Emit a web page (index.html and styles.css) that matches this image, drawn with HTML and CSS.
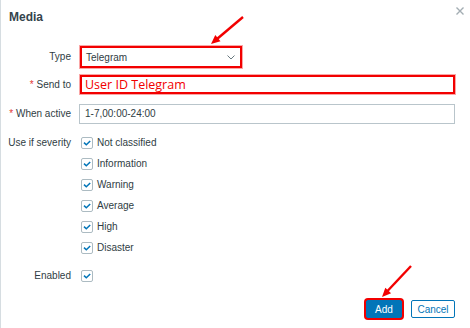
FILE: index.html
```html
<!DOCTYPE html>
<html>
<head>
  <meta charset="UTF-8">
  <title>Media</title>
  <link rel="stylesheet" href="styles.css">
</head>
<body>
  <div class="dialog">
    <div class="dialog-head">
      <h4 class="dialog-title">Media</h4>
      <button class="btn-close" title="Close">
        <svg width="8" height="8" viewBox="0 0 8 8"><path d="M0.5 0.5 L7.5 7.5 M7.5 0.5 L0.5 7.5" stroke="#a3adb3" stroke-width="1.4" fill="none"/></svg>
      </button>
    </div>

    <div class="form">
      <div class="form-row row-type">
        <label class="form-label">Type</label>
        <div class="form-field">
          <div class="select marked">
            <span>Telegram</span>
            <svg width="8" height="5" viewBox="0 0 8 5"><path d="M0.5 0.5 L4 4 L7.5 0.5" stroke="#68787f" stroke-width="1" fill="none"/></svg>
          </div>
        </div>
      </div>

      <div class="form-row row-sendto">
        <label class="form-label"><span class="req">*</span> Send to</label>
        <div class="form-field">
          <div class="input input-note marked">User ID Telegram</div>
        </div>
      </div>

      <div class="form-row row-active">
        <label class="form-label"><span class="req">*</span> When active</label>
        <div class="form-field">
          <div class="input">1-7,00:00-24:00</div>
        </div>
      </div>

      <div class="form-row row-severity">
        <label class="form-label">Use if severity</label>
        <div class="form-field checks">
          <div class="check"><span class="cb"></span>Not classified</div>
          <div class="check"><span class="cb"></span>Information</div>
          <div class="check"><span class="cb"></span>Warning</div>
          <div class="check"><span class="cb"></span>Average</div>
          <div class="check"><span class="cb"></span>High</div>
          <div class="check"><span class="cb"></span>Disaster</div>
        </div>
      </div>

      <div class="form-row row-enabled">
        <label class="form-label">Enabled</label>
        <div class="form-field">
          <div class="check"><span class="cb"></span></div>
        </div>
      </div>
    </div>

    <div class="dialog-foot">
      <button class="btn btn-primary marked-btn">Add</button>
      <button class="btn btn-alt">Cancel</button>
    </div>
  </div>

  <!-- red annotation arrows -->
  <svg class="annot" width="470" height="328" viewBox="0 0 470 328">
    <line x1="243" y1="17" x2="217" y2="39" stroke="#f20000" stroke-width="2.4"/>
    <polygon points="211,44 220.5,41.3 215.3,35.1" fill="#f20000"/>
    <line x1="411" y1="266" x2="387.5" y2="291" stroke="#f20000" stroke-width="2.4"/>
    <polygon points="382,297 391.1,293.2 385.3,287.7" fill="#f20000"/>
  </svg>
</body>
</html>
```

FILE: styles.css
```css
* {
  box-sizing: border-box;
}

body {
  margin: 0;
  position: relative;
  font-family: "Liberation Sans", Arial, sans-serif;
  font-size: 10px;
  color: #2f3d44;
  background-color: #fff;
}

.dialog {
  height: 328px;
  border-left: 1px solid #d6dde1;
}

.dialog-head {
  display: flex;
  justify-content: space-between;
  align-items: flex-start;
  height: 46px;
  padding: 7px 6px 0 8px;
}

.dialog-title {
  margin: 3px 0 0;
  font-size: 12px;
  line-height: 14px;
  font-weight: bold;
  color: #34434c;
}

.btn-close {
  border: none;
  background: none;
  padding: 0;
  width: 8px;
  height: 8px;
  line-height: 0;
}

.form {
  padding-right: 15px;
}

.form-row {
  display: flex;
  align-items: center;
}

.form-label {
  flex: none;
  width: 70px;
  margin-right: 8px;
  text-align: right;
  line-height: 12px;
}

.form-field {
  flex: 1;
}

.req {
  color: #e33734;
}

.row-type {
  margin-bottom: 7px;
}

.row-sendto {
  margin-bottom: 10px;
}

.row-severity {
  align-items: flex-start;
  margin-top: 13px;
}

.row-enabled {
  margin-top: 16px;
}

.select {
  display: flex;
  justify-content: space-between;
  align-items: center;
  width: 162px;
  height: 22px;
  margin-left: 1px;
  padding: 0 5px 0 4px;
}

.input {
  height: 20px;
  padding: 0 5px;
  border: 1px solid #b9c5cb;
  line-height: 18px;
}

.input-note {
  height: 19px;
  margin-left: 1px;
  padding: 0 3px;
  font-family: "Open Sans", "Noto Sans", sans-serif;
  font-size: 12.5px;
  line-height: 15px;
  color: #f20000;
}

.marked {
  border: 2px solid #f20000;
  box-shadow: 0 0 0 1px rgba(242, 0, 0, 0.35);
}

.checks {
  display: flex;
  flex-direction: column;
  gap: 9px;
}

.check {
  display: flex;
  align-items: center;
  gap: 4px;
  height: 12px;
  line-height: 12px;
  margin-left: 2px;
}

.cb {
  flex: none;
  width: 12px;
  height: 12px;
  border: 1px solid #acbbc2;
  border-radius: 2px;
  background: #fff url("data:image/svg+xml,%3Csvg xmlns='http://www.w3.org/2000/svg' width='10' height='10' viewBox='0 0 10 10'%3E%3Cpath d='M2 4.6 L4.3 6.8 L8.2 3' stroke='%230275b8' stroke-width='1.5' fill='none'/%3E%3C/svg%3E") center no-repeat;
}

.dialog-foot {
  display: flex;
  justify-content: flex-end;
  gap: 9px;
  margin-top: 18px;
  padding-right: 15px;
}

.btn {
  height: 18px;
  padding: 0;
  border: 1px solid #0275b8;
  border-radius: 2px;
  font-family: "Liberation Sans", Arial, sans-serif;
  font-size: 10px;
  cursor: pointer;
}

.btn-primary {
  width: 36px;
  background-color: #0275b8;
  color: #fff;
}

.btn-alt {
  width: 44px;
  background-color: #fff;
  color: #0275b8;
}

.marked-btn {
  box-shadow: 0 0 0 2px #f20000;
}

.annot {
  position: absolute;
  top: 0;
  left: 0;
  pointer-events: none;
}
```
